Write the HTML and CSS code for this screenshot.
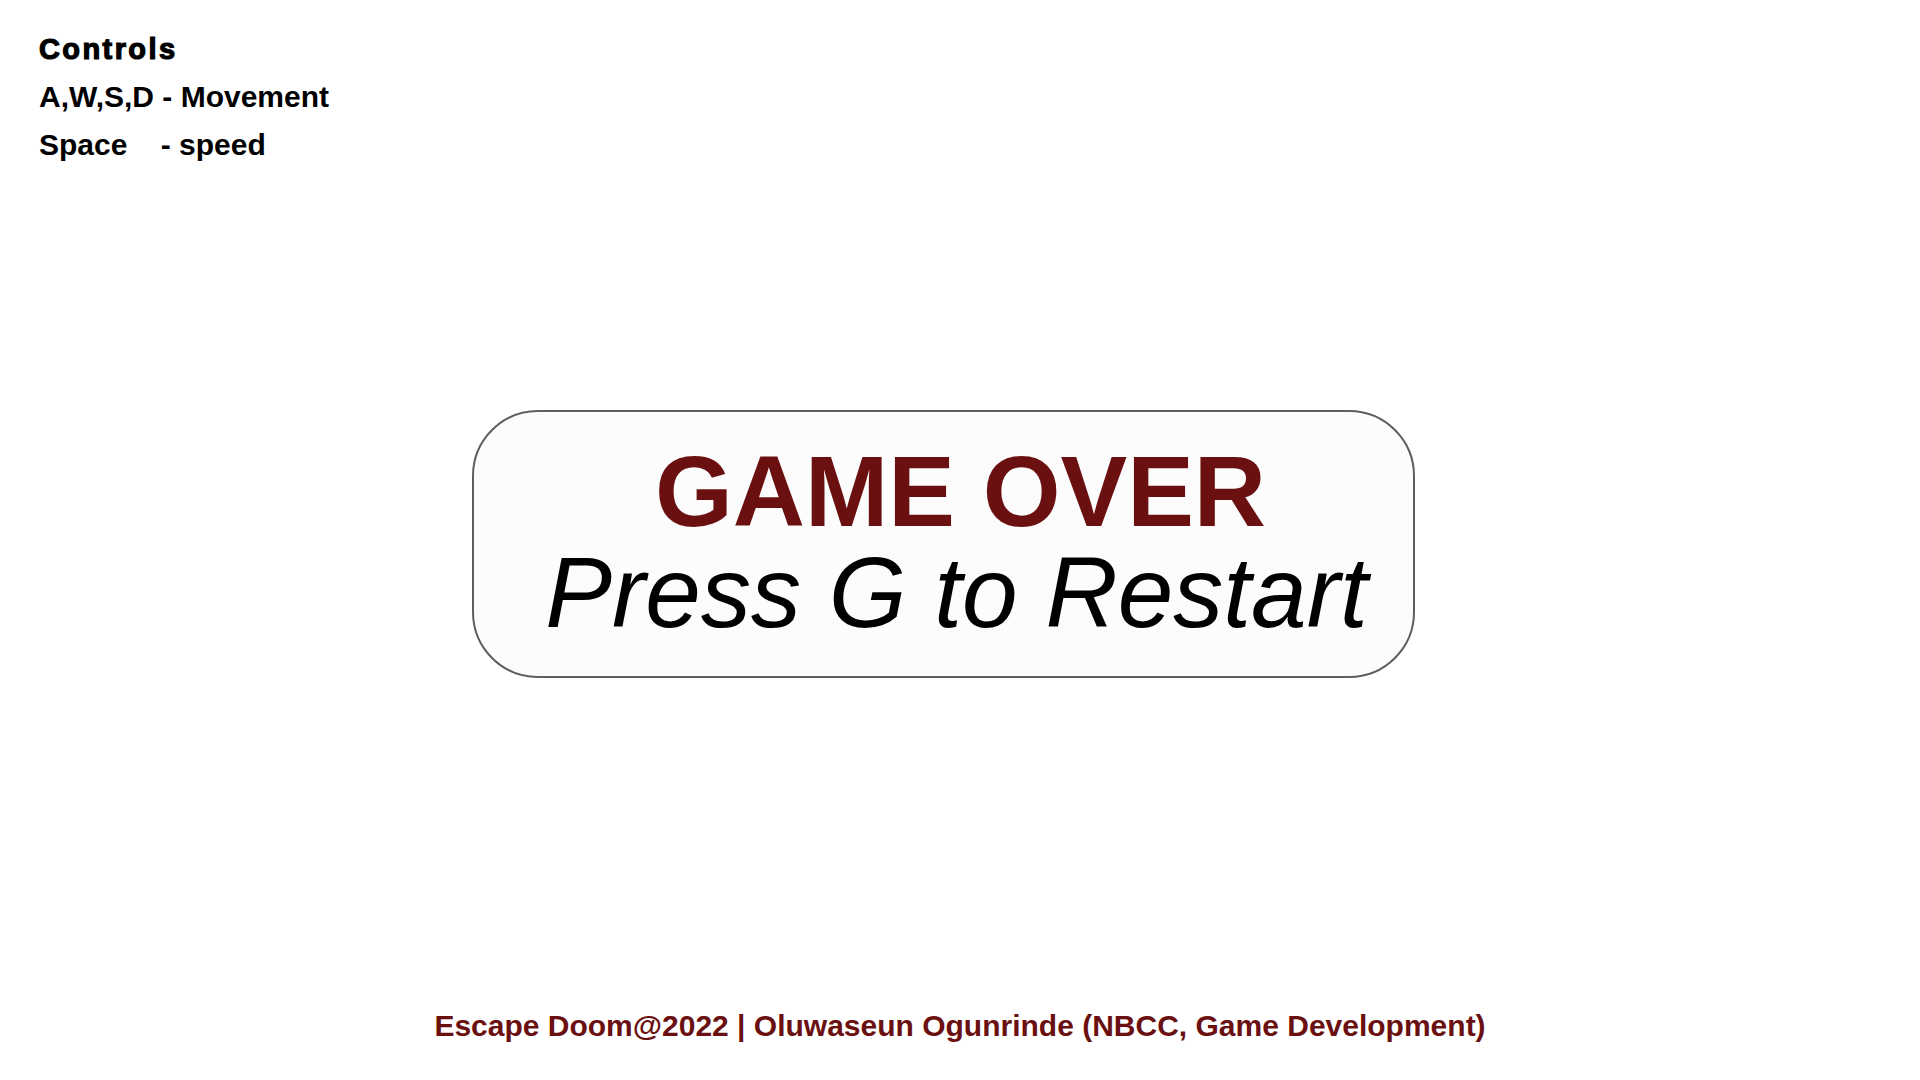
FILE: index.html
```html
<!DOCTYPE html>
<html lang="en">
<head>
<meta charset="utf-8">
<title>Escape Doom - Game Over</title>
<link rel="stylesheet" href="styles.css">
</head>
<body>
<div class="page">
  <section class="controls">
    <div class="controls-title">Controls</div>
    <div class="controls-line">A,W,S,D - Movement</div>
    <div class="controls-line">Space&nbsp;&nbsp;&nbsp; - speed</div>
  </section>
  <main class="gameover-box">
    <div class="gameover-title">GAME OVER</div>
    <div class="gameover-sub">Press G to Restart</div>
  </main>
  <footer class="footer">Escape Doom@2022 | Oluwaseun Ogunrinde (NBCC, Game Development)</footer>
</div>
</body>
</html>
```
FILE: styles.css
```css
html, body {
  margin: 0;
  padding: 0;
  background: #ffffff;
}

.page {
  width: 1920px;
  height: 1080px;
  overflow: hidden;
  display: flex;
  flex-direction: column;
  font-family: "Liberation Sans", Arial, sans-serif;
}

.controls {
  padding: 25px 0 0 39px;
  color: #000;
}

.controls-title {
  font-size: 29px;
  line-height: 48px;
  font-weight: 700;
  letter-spacing: 2.4px;
  -webkit-text-stroke: 1.2px #000;
}

.controls-line {
  font-size: 30px;
  line-height: 48px;
  font-weight: 700;
}

.gameover-box {
  box-sizing: border-box;
  width: 943px;
  height: 268px;
  margin: 241px 0 0 472px;
  padding: 29px 0 0 34px;
  border: 2px solid #5e5e5e;
  border-radius: 66px;
  background: #fcfcfc;
  text-align: center;
}

.gameover-title {
  font-size: 100px;
  line-height: 101px;
  font-weight: 700;
  color: #6b1010;
}

.gameover-sub {
  margin-right: 8px;
  font-size: 100px;
  line-height: 101px;
  font-style: italic;
  color: #000;
}

.footer {
  margin-top: 331px;
  font-size: 30px;
  line-height: 34px;
  font-weight: 700;
  color: #6b1010;
  text-align: center;
}
```
